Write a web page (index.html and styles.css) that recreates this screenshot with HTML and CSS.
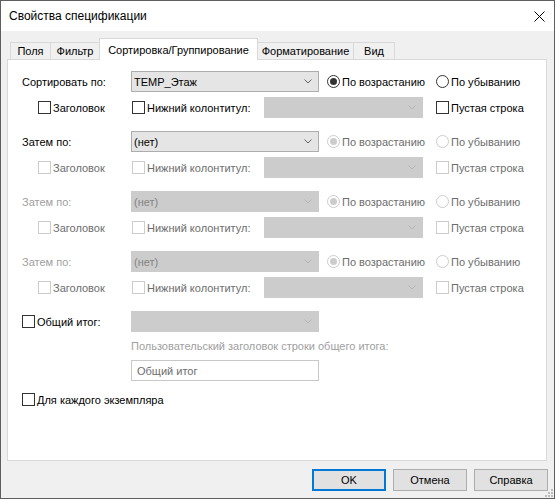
FILE: index.html
```html
<!DOCTYPE html>
<html lang="ru">
<head>
<meta charset="utf-8">
<title>Свойства спецификации</title>
<link rel="stylesheet" href="styles.css">
</head>
<body>
<div class="window">
  <div class="titlebar">
    <span class="title">Свойства спецификации</span>
    <svg class="close" width="11" height="11" viewBox="0 0 11 11"><path d="M0.5 0.5 L10.5 10.5 M10.5 0.5 L0.5 10.5" stroke="#000" stroke-width="1" fill="none"/></svg>
  </div>
  <div class="client">
    <div class="tabs">
      <div class="tab t1">Поля</div>
      <div class="tab t2">Фильтр</div>
      <div class="tab t3 active">Сортировка/Группирование</div>
      <div class="tab t4">Форматирование</div>
      <div class="tab t5">Вид</div>
    </div>
    <div class="panel">
      <div class="group">
        <span class="lbl">Сортировать по:</span>
        <div class="combo main"><span>TEMP_Этаж</span><svg class="chev" width="8" height="5" viewBox="0 0 8 5"><polyline points="0.5,0.5 4,4 7.5,0.5" fill="none" stroke="#606060" stroke-width="1"/></svg></div>
        <label class="radio asc on"><span class="rb"></span>По возрастанию</label>
        <label class="radio desc"><span class="rb"></span>По убыванию</label>
        <label class="chk c-head"><span class="box"></span>Заголовок</label>
        <label class="chk c-foot"><span class="box"></span>Нижний колонтитул:</label>
        <div class="combo sub dis"><svg class="chev" width="8" height="5" viewBox="0 0 8 5"><polyline points="0.5,0.5 4,4 7.5,0.5" fill="none" stroke="#b4b4b4" stroke-width="1"/></svg></div>
        <label class="chk c-empty"><span class="box"></span>Пустая строка</label>
      </div>

      <div class="group">
        <span class="lbl">Затем по:</span>
        <div class="combo main"><span>(нет)</span><svg class="chev" width="8" height="5" viewBox="0 0 8 5"><polyline points="0.5,0.5 4,4 7.5,0.5" fill="none" stroke="#606060" stroke-width="1"/></svg></div>
        <label class="radio asc on dis"><span class="rb"></span>По возрастанию</label>
        <label class="radio desc dis"><span class="rb"></span>По убыванию</label>
        <label class="chk c-head dis"><span class="box"></span>Заголовок</label>
        <label class="chk c-foot dis"><span class="box"></span>Нижний колонтитул:</label>
        <div class="combo sub dis"><svg class="chev" width="8" height="5" viewBox="0 0 8 5"><polyline points="0.5,0.5 4,4 7.5,0.5" fill="none" stroke="#b4b4b4" stroke-width="1"/></svg></div>
        <label class="chk c-empty dis"><span class="box"></span>Пустая строка</label>
      </div>

      <div class="group">
        <span class="lbl dis">Затем по:</span>
        <div class="combo main dis"><span>(нет)</span><svg class="chev" width="8" height="5" viewBox="0 0 8 5"><polyline points="0.5,0.5 4,4 7.5,0.5" fill="none" stroke="#b4b4b4" stroke-width="1"/></svg></div>
        <label class="radio asc on dis"><span class="rb"></span>По возрастанию</label>
        <label class="radio desc dis"><span class="rb"></span>По убыванию</label>
        <label class="chk c-head dis"><span class="box"></span>Заголовок</label>
        <label class="chk c-foot dis"><span class="box"></span>Нижний колонтитул:</label>
        <div class="combo sub dis"><svg class="chev" width="8" height="5" viewBox="0 0 8 5"><polyline points="0.5,0.5 4,4 7.5,0.5" fill="none" stroke="#b4b4b4" stroke-width="1"/></svg></div>
        <label class="chk c-empty dis"><span class="box"></span>Пустая строка</label>
      </div>

      <div class="group">
        <span class="lbl dis">Затем по:</span>
        <div class="combo main dis"><span>(нет)</span><svg class="chev" width="8" height="5" viewBox="0 0 8 5"><polyline points="0.5,0.5 4,4 7.5,0.5" fill="none" stroke="#b4b4b4" stroke-width="1"/></svg></div>
        <label class="radio asc on dis"><span class="rb"></span>По возрастанию</label>
        <label class="radio desc dis"><span class="rb"></span>По убыванию</label>
        <label class="chk c-head dis"><span class="box"></span>Заголовок</label>
        <label class="chk c-foot dis"><span class="box"></span>Нижний колонтитул:</label>
        <div class="combo sub dis"><svg class="chev" width="8" height="5" viewBox="0 0 8 5"><polyline points="0.5,0.5 4,4 7.5,0.5" fill="none" stroke="#b4b4b4" stroke-width="1"/></svg></div>
        <label class="chk c-empty dis"><span class="box"></span>Пустая строка</label>
      </div>

      <div class="total">
        <label class="chk t-chk"><span class="box"></span>Общий итог:</label>
        <div class="combo t-combo dis"><svg class="chev" width="8" height="5" viewBox="0 0 8 5"><polyline points="0.5,0.5 4,4 7.5,0.5" fill="none" stroke="#b4b4b4" stroke-width="1"/></svg></div>
        <span class="caption">Пользовательский заголовок строки общего итога:</span>
        <div class="textbox">Общий итог</div>
      </div>

      <label class="chk each"><span class="box"></span>Для каждого экземпляра</label>
    </div>
    <div class="buttons">
      <button class="btn default">OK</button>
      <button class="btn">Отмена</button>
      <button class="btn">Справка</button>
    </div>
  </div>
  <svg class="grip" width="11" height="11" viewBox="0 0 11 11">
    <rect x="8" y="2" width="2" height="2" fill="#bcbcbc"/>
    <rect x="5" y="5" width="2" height="2" fill="#bcbcbc"/>
    <rect x="8" y="5" width="2" height="2" fill="#bcbcbc"/>
    <rect x="2" y="8" width="2" height="2" fill="#bcbcbc"/>
    <rect x="5" y="8" width="2" height="2" fill="#bcbcbc"/>
    <rect x="8" y="8" width="2" height="2" fill="#bcbcbc"/>
  </svg>
</div>
</body>
</html>
```

FILE: styles.css
```css
* { box-sizing: border-box; }
html, body { margin: 0; padding: 0; }
body {
  background: #fff;
  font-family: "Liberation Sans", Arial, sans-serif;
  font-size: 11px;
  color: #000;
}
.window {
  position: relative;
  width: 555px;
  height: 499px;
  border: 1px solid #5e5e5e;
  background: #f0f0f0;
  display: flex;
  flex-direction: column;
}
.titlebar {
  flex: none;
  height: 30px;
  background: #fff;
  display: flex;
  align-items: center;
  padding-left: 8px;
}
.title { font-size: 12px; }
.close { margin-left: auto; margin-right: 9px; }

.client { flex: 1; display: flex; flex-direction: column; min-height: 0; }

.tabs {
  flex: none;
  display: flex;
  align-items: flex-end;
  height: 21px;
  margin: 7px 0 0 9px;
}
.tab {
  height: 17px;
  border: 1px solid #d9d9d9;
  border-bottom: none;
  background: #f0f0f0;
  margin-left: -1px;
  display: flex;
  align-items: center;
  justify-content: center;
  white-space: nowrap;
}
.tab:first-child { margin-left: 0; }
.t1 { width: 41px; }
.t2 { width: 50px; }
.t3 { width: 159px; }
.t4 { width: 97px; }
.t5 { width: 42px; }
.tab.active {
  height: 22px;
  margin-bottom: -1px;
  background: #fff;
  position: relative;
  z-index: 1;
}

.panel {
  flex: 1;
  margin: 0 7px 0 6px;
  background: #fff;
  border: 1px solid #d9d9d9;
  padding: 11px 0 0 14px;
}

.group {
  display: grid;
  grid-template-columns: 109px 133px 55px 8px 96px 13px 1fr;
  grid-template-rows: 21px 21px;
  row-gap: 5px;
  align-items: center;
  margin-bottom: 13px;
}
.lbl { grid-column: 1; grid-row: 1; }
.lbl.dis { color: #a0a0a0; }
.group .main { grid-column: 2 / 4; grid-row: 1; }
.asc { grid-column: 5 / 7; grid-row: 1; }
.desc { grid-column: 7; grid-row: 1; }
.c-head { grid-column: 1; grid-row: 2; margin-left: 16px; }
.c-foot { grid-column: 2; grid-row: 2; margin-left: 1px; }
.group .sub { grid-column: 3 / 6; grid-row: 2; }
.c-empty { grid-column: 7; grid-row: 2; }

.combo {
  height: 21px;
  border: 1px solid #adadad;
  background: #e5e5e5;
  display: flex;
  align-items: center;
  padding-left: 2px;
}
.combo .chev { margin-left: auto; margin-right: 6px; flex: none; }
.combo.dis { background: #cccccc; border-color: #cccccc; color: #838383; }

.chk, .radio {
  display: flex;
  align-items: center;
  white-space: nowrap;
}
.box {
  flex: none;
  width: 13px;
  height: 13px;
  border: 1px solid #333;
  background: #fff;
  margin-right: 2px;
}
.chk.dis { color: #6d6d6d; }
.chk.dis .box { border-color: #cccccc; }

.rb {
  flex: none;
  position: relative;
  width: 13px;
  height: 13px;
  border: 1px solid #333;
  border-radius: 50%;
  background: #fff;
  margin-right: 2px;
}
.radio.on .rb::after {
  content: "";
  position: absolute;
  left: 2px;
  top: 2px;
  width: 7px;
  height: 7px;
  border-radius: 50%;
  background: #333;
}
.radio.dis { color: #6d6d6d; }
.radio.dis .rb { border-color: #cccccc; }
.radio.dis.on .rb::after { background: #cccccc; }

.total {
  display: grid;
  grid-template-columns: 109px 188px;
  grid-template-rows: 21px 28px 21px;
  align-items: center;
  margin-top: 3px;
}
.t-chk { grid-column: 1; grid-row: 1; }
.t-combo { grid-column: 2; grid-row: 1; }
.caption { grid-column: 2; grid-row: 2; color: #a0a0a0; white-space: nowrap; }
.textbox {
  grid-column: 2;
  grid-row: 3;
  height: 21px;
  border: 1px solid #c8c8c8;
  background: #fff;
  color: #6d6d6d;
  padding-left: 5px;
  display: flex;
  align-items: center;
}
.each { margin-top: 8px; height: 21px; }

.buttons {
  flex: none;
  display: flex;
  justify-content: flex-end;
  gap: 7px;
  height: 22px;
  margin: 8px 6px 7px 0;
}
.btn {
  width: 74px;
  height: 22px;
  padding: 0;
  font: inherit;
  color: #000;
  background: #e1e1e1;
  border: 1px solid #adadad;
  display: flex;
  align-items: center;
  justify-content: center;
}
.btn.default { border: 2px solid #0078d7; }

.grip { position: absolute; right: 0; bottom: 0; }
```
